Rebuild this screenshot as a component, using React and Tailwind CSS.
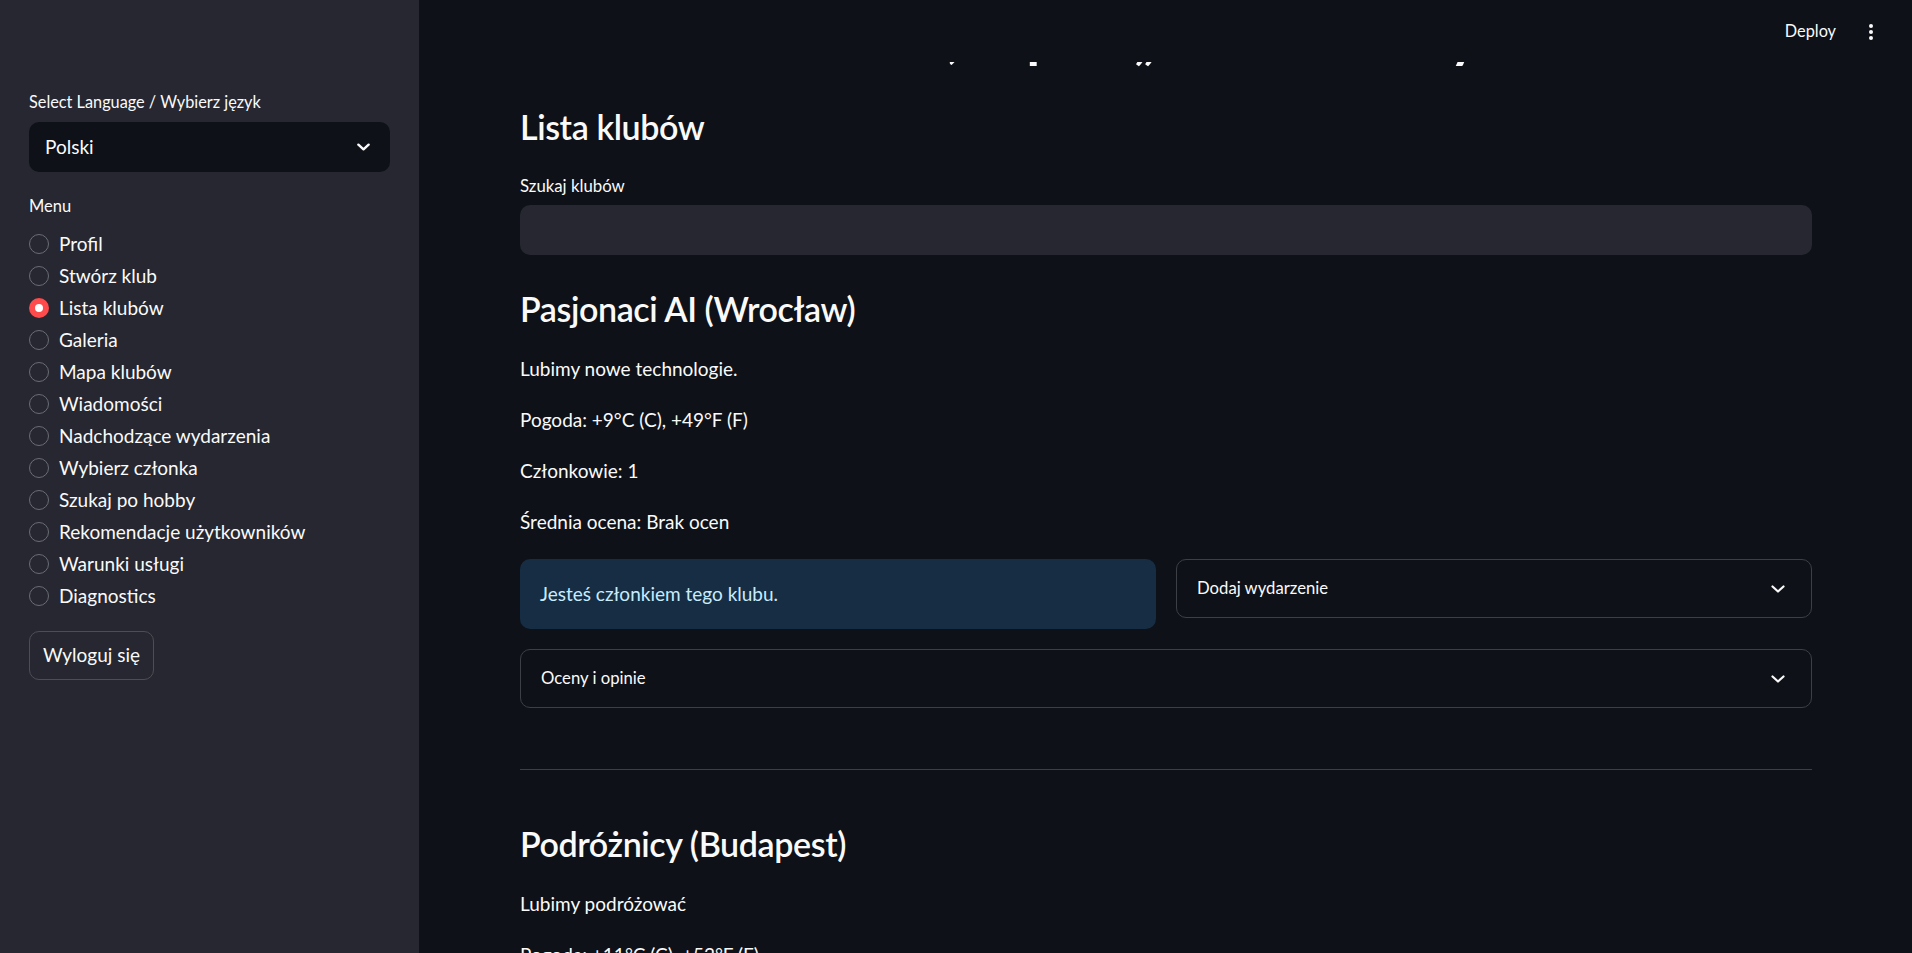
import React from "react";

const menuItems = [
  "Profil",
  "Stwórz klub",
  "Lista klubów",
  "Galeria",
  "Mapa klubów",
  "Wiadomości",
  "Nadchodzące wydarzenia",
  "Wybierz członka",
  "Szukaj po hobby",
  "Rekomendacje użytkowników",
  "Warunki usługi",
  "Diagnostics",
];

function Chevron({ className = "", strokeWidth = 2.2 }) {
  return (
    <svg viewBox="0 0 14 8" className={className} fill="none">
      <path
        d="M1.5 1.5 L7 6.5 L12.5 1.5"
        stroke="currentColor"
        strokeWidth={strokeWidth}
        strokeLinecap="round"
        strokeLinejoin="round"
      />
    </svg>
  );
}

function Radio({ label, checked }) {
  return (
    <div className="flex h-[32px] items-center gap-[10px]">
      {checked ? (
        <span className="flex h-[20px] w-[20px] items-center justify-center rounded-full bg-[#ff4b4b]">
          <span className="h-[8px] w-[8px] rounded-full bg-white" />
        </span>
      ) : (
        <span className="h-[20px] w-[20px] rounded-full border border-[#6b6d74]" />
      )}
      <span className="text-[19px] leading-[32px]">{label}</span>
    </div>
  );
}

function Expander({ title }) {
  return (
    <div className="flex h-[59px] items-center justify-between rounded-[10px] border border-[#3d3f45] pl-[20px] pr-[26px]">
      <span className="text-[16.7px] leading-[21px]">{title}</span>
      <Chevron className="h-[8px] w-[14px]" />
    </div>
  );
}

function Paragraph({ children, className = "" }) {
  return <p className={`text-[19px] leading-[32px] ${className}`}>{children}</p>;
}

function Heading({ children, className = "" }) {
  return (
    <h3 className={`text-[34px] font-semibold leading-[42px] tracking-[-0.4px] ${className}`}>
      {children}
    </h3>
  );
}

export default function App() {
  return (
    <div className="flex h-[953px] w-full overflow-hidden bg-[#0e1117] font-['Lato','Noto_Sans',sans-serif] text-[#fafafa]">
      {/* Sidebar */}
      <aside className="w-[419px] shrink-0 bg-[#262730] px-[29px] pt-[91px]">
        <div className="text-[16.3px] leading-[21px]">Select Language / Wybierz język</div>
        <div className="mt-[10px] flex h-[50px] items-center justify-between rounded-[10px] bg-[#0e1117] pl-[16px] pr-[20px]">
          <span className="text-[19px] leading-[32px]">Polski</span>
          <Chevron className="h-[8px] w-[13px]" strokeWidth={2.6} />
        </div>

        <div className="mt-[24px] text-[16.5px] leading-[21px]">Menu</div>
        <div className="mt-[11px] flex flex-col">
          {menuItems.map((item) => (
            <Radio key={item} label={item} checked={item === "Lista klubów"} />
          ))}
        </div>

        <button className="mt-[19px] inline-flex h-[49px] w-[125px] items-center justify-center rounded-[10px] border border-[#4d4e55] text-[19px]">
          Wyloguj się
        </button>
      </aside>

      {/* Main */}
      <main className="relative flex-1 overflow-hidden">
        <header className="absolute inset-x-0 top-0 z-10 h-[62px] bg-[#0e1117]">
          <div className="flex justify-end pr-[39px] pt-[20px]">
            <span className="text-[16.3px] leading-[21px]">Deploy</span>
            <div className="ml-[33px] mt-[4px] flex w-[4px] flex-col gap-[2px]">
              <span className="h-[4px] w-[4px] rounded-full bg-[#fafafa]" />
              <span className="h-[4px] w-[4px] rounded-full bg-[#fafafa]" />
              <span className="h-[4px] w-[4px] rounded-full bg-[#fafafa]" />
            </div>
          </div>
        </header>

        <div className="pl-[101px] pr-[100px] pt-[3px]">
          <h1 className="h-[66px] whitespace-nowrap text-center text-[55px] font-bold leading-[66px]">
            Halo, zapisz „Nowe Hobby”
          </h1>

          <Heading className="mt-[37px]">Lista klubów</Heading>
          <div className="mt-[27px] text-[16.8px] leading-[21px]">Szukaj klubów</div>
          <div className="mt-[9px] h-[50px] rounded-[10px] bg-[#262730]" />

          <Heading className="mt-[33px]">Pasjonaci AI (Wrocław)</Heading>
          <Paragraph className="mt-[23px]">Lubimy nowe technologie.</Paragraph>
          <Paragraph className="mt-[19px]">Pogoda: +9°C (C), +49°F (F)</Paragraph>
          <Paragraph className="mt-[19px]">Członkowie: 1</Paragraph>
          <Paragraph className="mt-[19px]">Średnia ocena: Brak ocen</Paragraph>

          <div className="mt-[21px] grid grid-cols-2 items-start gap-[20px]">
            <div className="flex h-[70px] items-center rounded-[10px] bg-[#172d43] px-[20px]">
              <span className="text-[19px] leading-[32px] text-[#c7ebff]">Jesteś członkiem tego klubu.</span>
            </div>
            <Expander title="Dodaj wydarzenie" />
          </div>
          <div className="mt-[20px]">
            <Expander title="Oceny i opinie" />
          </div>

          <hr className="mt-[61px] border-0 border-t border-[#3d3f45]" />

          <Heading className="mt-[53px]">Podróżnicy (Budapest)</Heading>
          <Paragraph className="mt-[23px]">Lubimy podróżować</Paragraph>
          <Paragraph className="mt-[19px]">Pogoda: +11°C (C), +52°F (F)</Paragraph>
        </div>
      </main>
    </div>
  );
}
